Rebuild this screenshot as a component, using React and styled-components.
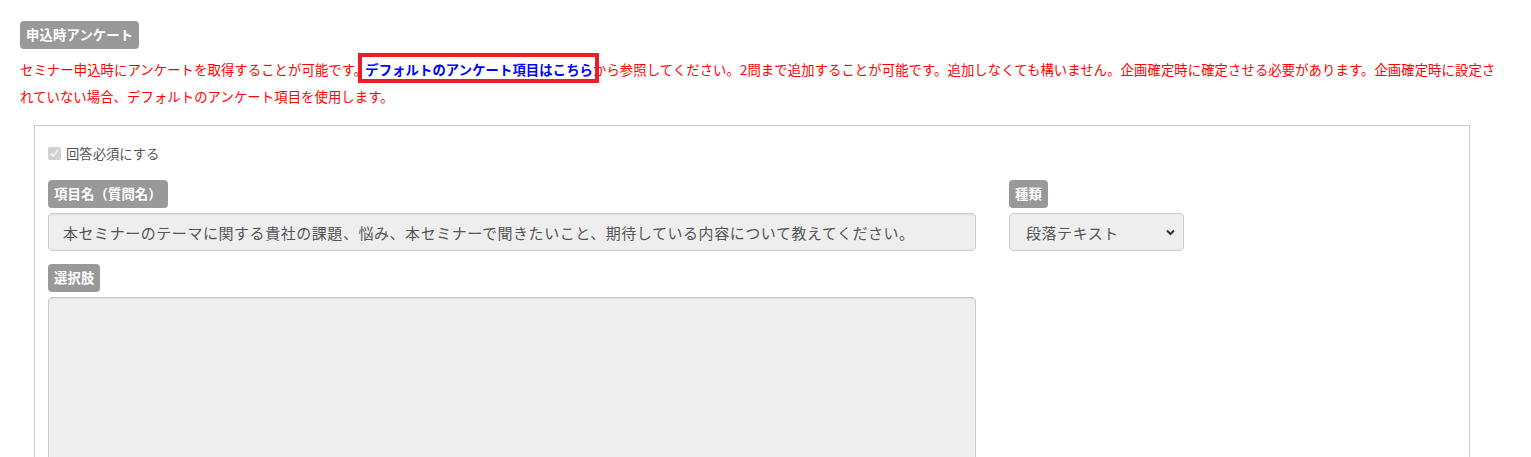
import React from "react";
import styled, { createGlobalStyle } from "styled-components";

const GlobalStyle = createGlobalStyle`
  html, body { margin: 0; padding: 0; background: #fff; }
  body {
    font-family: "Noto Sans CJK JP", "Noto Sans", sans-serif;
    font-size: 13.33px;
    color: #333;
    text-spacing-trim: space-all;
  }
`;

const Page = styled.div`
  padding: 21px 0 0 20px;
  width: 1480px;
`;

const Badge = styled.span`
  display: inline-block;
  height: 28px;
  line-height: 28px;
  padding: 0 6px;
  background: #999;
  color: #fff;
  font-weight: bold;
  font-size: 13.33px;
  letter-spacing: 0.15px;
  border-radius: 4px;
  white-space: nowrap;
`;

const Description = styled.p`
  margin: 7px 0 0;
  color: #ff0000;
  font-size: 13.33px;
  letter-spacing: 0.1px;
  line-height: 27px;
`;

const DefaultLink = styled.a`
  color: #0000ff;
  font-weight: bold;
  text-decoration: none;
  padding: 3px 2px 0 3px;
  margin: 0 -2px 0 -5px;
  outline: 4px solid #ee1c25;
  outline-offset: 0px;
`;

const Panel = styled.div`
  margin: 15px 0 0 14px;
  width: 1436px;
  height: 400px;
  box-sizing: border-box;
  border: 1px solid #ccc;
  padding: 17px 13px;
`;

const CheckRow = styled.label`
  display: flex;
  align-items: center;
  gap: 5px;
  height: 20px;
  color: #555;
  font-size: 13.33px;
`;

const Check = styled.input`
  margin: 0;
  width: 13px;
  height: 13px;
`;

const FieldsRow = styled.div`
  display: flex;
  gap: 33px;
  margin-top: 17px;
`;

const Column = styled.div`
  display: flex;
  flex-direction: column;
  width: ${(p) => p.$width}px;
`;

const Field = styled.div`
  display: flex;
  flex-direction: column;
  align-items: flex-start;
  gap: 5px;
  & + & { margin-top: 13px; }
`;

const TextInput = styled.div`
  box-sizing: border-box;
  width: 100%;
  height: 38px;
  padding: 0 14px;
  display: flex;
  align-items: center;
  background: #eee;
  border: 1px solid #ccc;
  border-radius: 4px;
  box-shadow: inset 0 1px 1px rgba(0, 0, 0, 0.075);
  color: #555;
  font-size: 15px;
  letter-spacing: 0.55px;
  white-space: nowrap;
`;

const SelectBox = styled.div`
  position: relative;
  box-sizing: border-box;
  width: 175px;
  height: 38px;
  padding: 0 16px;
  display: flex;
  align-items: center;
  background: #eee;
  border: 1px solid #ccc;
  border-radius: 4px;
  color: #555;
  font-size: 15px;
  letter-spacing: 0.55px;
`;

const Chevron = styled.svg`
  position: absolute;
  right: 8px;
  top: 50%;
  margin-top: -3px;
  width: 9px;
  height: 7px;
`;

const TextArea = styled.div`
  box-sizing: border-box;
  width: 100%;
  height: 220px;
  background: #eee;
  border: 1px solid #ccc;
  border-radius: 4px;
  box-shadow: inset 0 1px 1px rgba(0, 0, 0, 0.075);
`;

export default function App() {
  return (
    <>
      <GlobalStyle />
      <Page>
        <Badge>申込時アンケート</Badge>
        <Description>
          セミナー申込時にアンケートを取得することが可能です。
          <DefaultLink href="#">デフォルトのアンケート項目はこちら</DefaultLink>
          から参照してください。2問まで追加することが可能です。追加しなくても構いません。企画確定時に確定させる必要があります。企画確定時に設定されていない場合、デフォルトのアンケート項目を使用します。
        </Description>
        <Panel>
          <CheckRow>
            <Check type="checkbox" checked disabled readOnly />
            回答必須にする
          </CheckRow>
          <FieldsRow>
            <Column $width={928}>
              <Field>
                <Badge>項目名（質問名）</Badge>
                <TextInput>
                  本セミナーのテーマに関する貴社の課題、悩み、本セミナーで聞きたいこと、期待している内容について教えてください。
                </TextInput>
              </Field>
              <Field>
                <Badge>選択肢</Badge>
                <TextArea />
              </Field>
            </Column>
            <Column $width={175}>
              <Field>
                <Badge>種類</Badge>
                <SelectBox>
                  段落テキスト
                  <Chevron viewBox="0 0 9 7">
                    <path d="M1 1.5 L4.5 5 L8 1.5" fill="none" stroke="#333" strokeWidth="2" />
                  </Chevron>
                </SelectBox>
              </Field>
            </Column>
          </FieldsRow>
        </Panel>
      </Page>
    </>
  );
}
